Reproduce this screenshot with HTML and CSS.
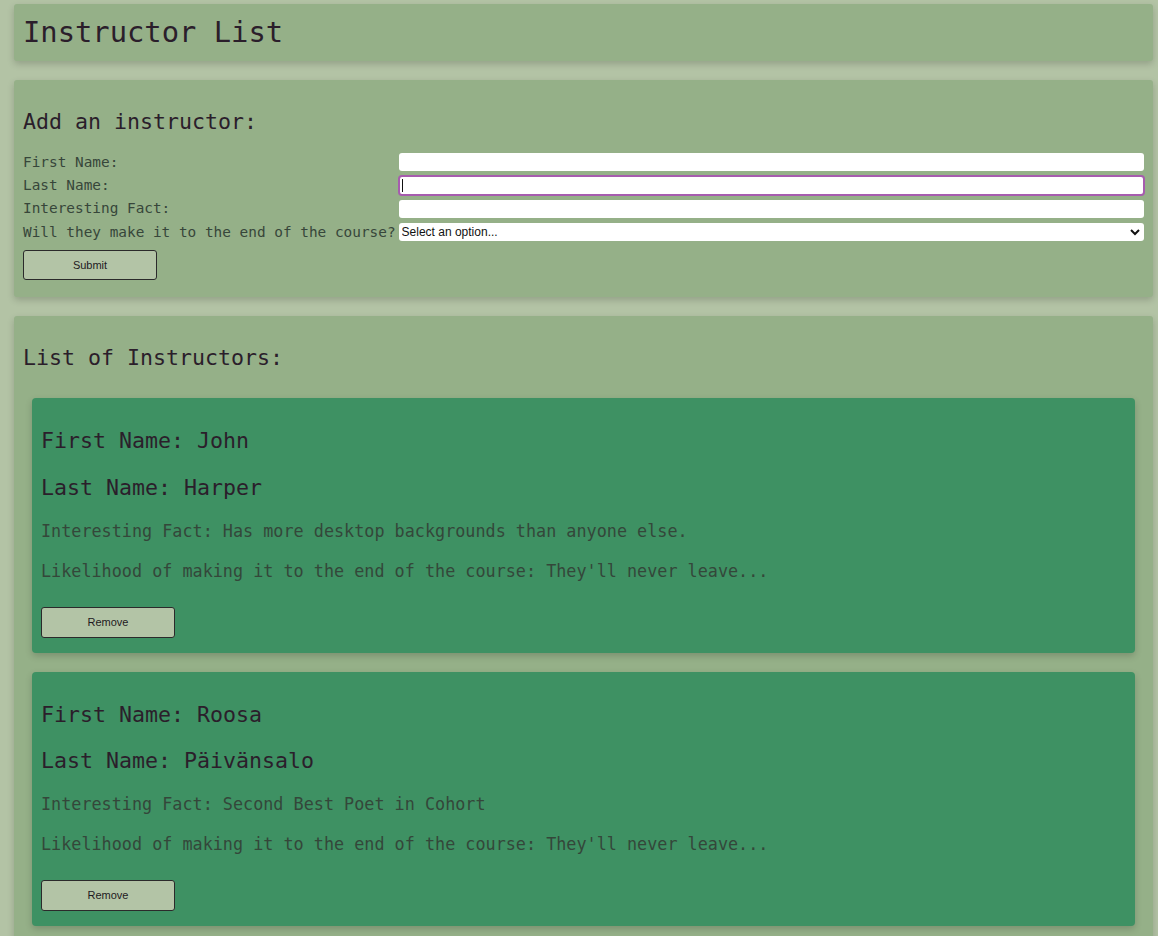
FILE: index.html
```html
<!DOCTYPE html>
<html lang="en">
<head>
<meta charset="utf-8">
<title>Instructor List</title>
<link rel="stylesheet" href="styles.css">
</head>
<body>
<div class="page">
  <header class="panel panel-title">
    <h1 class="title">Instructor List</h1>
  </header>

  <section class="panel panel-form">
    <h2 class="section-title">Add an instructor:</h2>
    <form class="add-form">
      <div class="fields">
        <label class="field-label" for="first">First Name:</label>
        <input class="field-input" id="first" type="text">
        <label class="field-label" for="last">Last Name:</label>
        <span class="focus-wrap"><input class="field-input is-focused" id="last" type="text"></span>
        <label class="field-label" for="fact">Interesting Fact:</label>
        <input class="field-input" id="fact" type="text">
        <label class="field-label" for="stay">Will they make it to the end of the course?</label>
        <span class="select-wrap">
          <select class="field-select" id="stay">
            <option>Select an option...</option>
          </select>
          <svg class="select-arrow" width="10" height="7" viewBox="0 0 10 7"><polyline points="1,1 5,5 9,1" fill="none" stroke="#111" stroke-width="2"/></svg>
        </span>
      </div>
      <button class="btn btn-submit" type="button">Submit</button>
    </form>
  </section>

  <section class="panel panel-list">
    <h2 class="section-title">List of Instructors:</h2>
    <div class="cards">
      <article class="card">
        <h2 class="card-name">First Name: John</h2>
        <h2 class="card-name">Last Name: Harper</h2>
        <p class="card-detail">Interesting Fact: Has more desktop backgrounds than anyone else.</p>
        <p class="card-detail">Likelihood of making it to the end of the course: They'll never leave...</p>
        <button class="btn btn-remove" type="button">Remove</button>
      </article>
      <article class="card">
        <h2 class="card-name">First Name: Roosa</h2>
        <h2 class="card-name">Last Name: Päivänsalo</h2>
        <p class="card-detail">Interesting Fact: Second Best Poet in Cohort</p>
        <p class="card-detail">Likelihood of making it to the end of the course: They'll never leave...</p>
        <button class="btn btn-remove" type="button">Remove</button>
      </article>
    </div>
  </section>
</div>
</body>
</html>
```

FILE: styles.css
```css
html, body {
  margin: 0;
  padding: 0;
  background: #b3c3a5;
}

body {
  font-family: "DejaVu Sans Mono", "Liberation Mono", monospace;
  font-size: 14.4px;
  line-height: 1.318;
  color: #2b1e2b;
}

.page {
  padding: 4px 5px 0 14px;
}

.panel {
  background: #95b088;
  border-radius: 3px;
  box-shadow: 0 3px 7px rgba(0, 0, 0, 0.18);
  margin-bottom: 19px;
  padding: 10px 9px;
}

.panel-title {
  padding: 10px 9px 9px;
}

.title {
  margin: 0;
  font-size: 28.8px;
  font-weight: normal;
  line-height: 1.318;
  color: #2b1e2b;
}

.section-title {
  margin: 17.9px 0;
  font-size: 21.6px;
  font-weight: normal;
  line-height: 1.318;
  color: #2b1e2b;
}

.fields {
  display: grid;
  grid-template-columns: auto 1fr;
  grid-auto-rows: 19px;
  column-gap: 3px;
  row-gap: 4.3px;
  align-items: center;
  margin-top: -1.5px;
}

.field-label {
  color: #37463a;
  white-space: nowrap;
}

.field-input {
  box-sizing: border-box;
  width: 100%;
  height: 18px;
  border: none;
  border-radius: 3px;
  background: #ffffff;
  padding: 0 3px;
  margin: 0;
  font-family: "Liberation Sans", Arial, sans-serif;
  font-size: 12px;
}

.focus-wrap {
  position: relative;
  display: block;
}

.field-input.is-focused {
  height: 19px;
  outline: 2px solid #a65cae;
  outline-offset: -1px;
}

.focus-wrap::after {
  content: "";
  position: absolute;
  left: 3px;
  top: 3px;
  width: 1px;
  height: 13px;
  background: #111;
}

.select-wrap {
  position: relative;
  display: block;
}

.field-select {
  box-sizing: border-box;
  display: block;
  width: 100%;
  height: 18px;
  border: none;
  border-radius: 3px;
  background: #ffffff;
  -webkit-appearance: none;
  appearance: none;
  padding: 0 3px;
  margin: 0;
  font-family: "Liberation Sans", Arial, sans-serif;
  font-size: 12px;
  color: #111;
}

.select-arrow {
  position: absolute;
  right: 4px;
  top: 6px;
  pointer-events: none;
}

.btn {
  display: block;
  box-sizing: border-box;
  width: 134px;
  border: 1px solid #2b2a2b;
  border-radius: 3px;
  background: #b3c4a6;
  font-family: "Liberation Sans", Arial, sans-serif;
  font-size: 11px;
  color: #1e1a1e;
  padding: 0;
}

.btn-submit {
  height: 30px;
  margin: 8.5px 0 7px;
}

.cards {
  padding: 8px 9px 0;
}

.card {
  background: #3e9163;
  border-radius: 4px;
  box-shadow: 0 3px 7px rgba(0, 0, 0, 0.18);
  padding: 11px 9px 9px;
  margin-bottom: 19px;
}

.card-name {
  margin: 17.9px 0;
  font-size: 21.6px;
  font-weight: normal;
  line-height: 1.318;
  color: #2b1e2b;
}

.card-detail {
  margin: 17.5px 0;
  font-size: 16.8px;
  line-height: 1.318;
  color: #34473a;
}

.btn-remove {
  height: 31px;
  margin: 25px 0 6px;
}
```
